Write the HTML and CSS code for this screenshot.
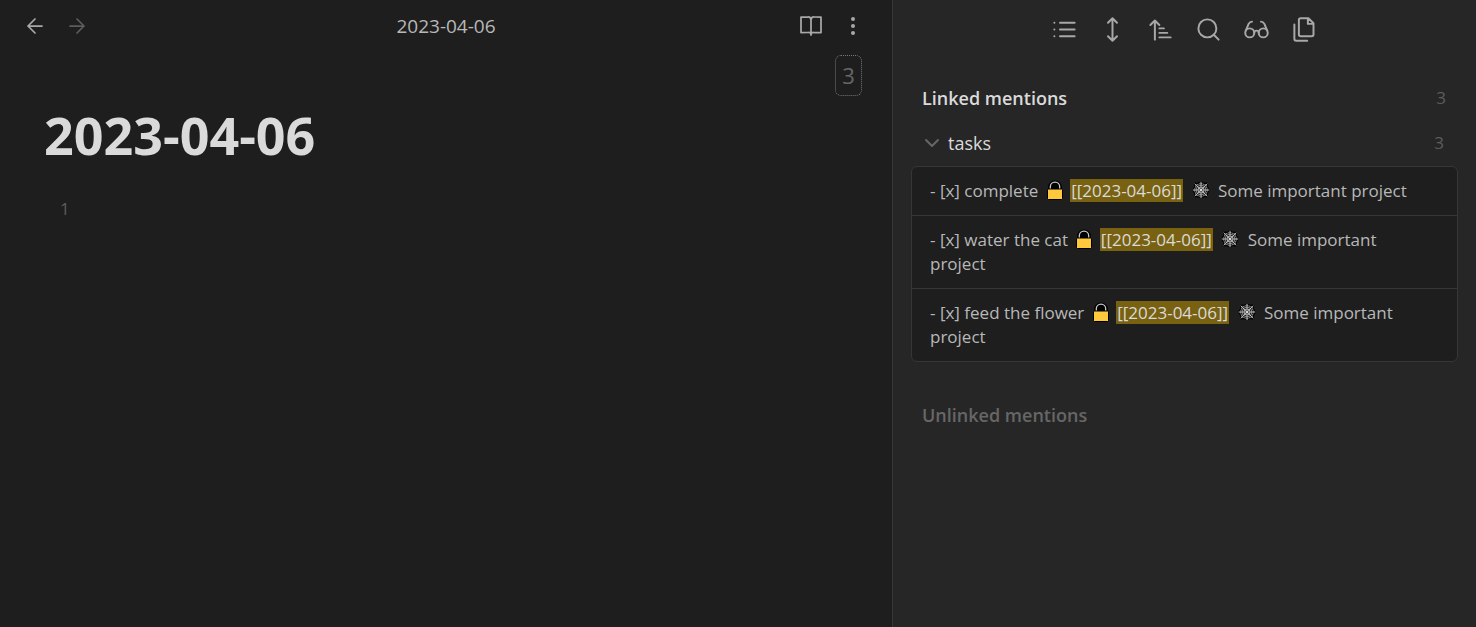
FILE: index.html
```
<!DOCTYPE html>
<html lang="en">
<head>
<meta charset="utf-8">
<title>2023-04-06</title>
<link rel="stylesheet" href="styles.css">
</head>
<body>
<svg class="sprite" aria-hidden="true">
  <symbol id="lock" viewBox="0 0 16 20">
    <path d="M1 10V7.500a7 7 0 0 1 14 0V10z" fill="#000"/>
    <path d="M3.300 9.500V6.800a4.700 4.700 0 0 1 9.400 0V9.500" fill="none" stroke="#c8c8c8" stroke-width="1.300"/>
    <rect x="0.500" y="9" width="15" height="10.500" rx="1" fill="#ffc83d" stroke="#000"/>
  </symbol>
  <symbol id="web" viewBox="0 0 20 20">
    <path d="M10 0l3.300 2 4-.2.3 4L20 10l-2.400 4.200-.3 4-4-.2-3.300 2-3.300-2-4 .2-.3-4L0 10l2.400-4.200.3-4 4 .2z" fill="#000"/>
    <g fill="none" stroke="#d0d0d0" stroke-width=".9">
      <path d="M10 .8v18.400M.8 10h18.400M3 3l14 14M17 3L3 17"/>
      <path d="M10 2.200Q12.800 4.200 15.800 4.200Q15.800 7.200 17.800 10Q15.800 12.800 15.800 15.800Q12.800 15.800 10 17.800Q7.200 15.800 4.200 15.800Q4.200 12.800 2.200 10Q4.200 7.200 4.200 4.200Q7.200 4.200 10 2.200z" stroke-dasharray="1.600 .5"/>
      <path d="M10 4.300Q12 5.800 14.200 5.800Q14.200 8 15.700 10Q14.200 12 14.200 14.200Q12 14.200 10 15.700Q8 14.200 5.800 14.200Q5.800 12 4.300 10Q5.800 8 5.800 5.800Q8 5.800 10 4.300z"/>
      <path d="M10 6.600L12.500 7.500L13.400 10L12.500 12.500L10 13.400L7.500 12.500L6.600 10L7.500 7.500z"/>
    </g>
    <circle cx="10" cy="10" r="1.400" fill="#d8d8d8"/>
  </symbol>
</svg>

<div class="workspace">
  <main class="pane">
    <header class="view-header">
      <nav class="button-group history" aria-label="History">
        <button class="icon-button" type="button" aria-label="Back"><svg class="icon" viewBox="0 0 24 24"><path d="M19 12H5M12 19l-7-7 7-7"/></svg></button>
        <button class="icon-button" type="button" aria-label="Forward" disabled><svg class="icon" viewBox="0 0 24 24"><path d="M5 12h14M12 5l7 7-7 7"/></svg></button>
      </nav>
      <div class="view-title">2023-04-06</div>
      <div class="button-group view-actions">
        <button class="icon-button" type="button" aria-label="Reading view"><svg class="icon" viewBox="0 0 24 24"><path d="M2 3h7a3 3 0 0 1 3 2.500A3 3 0 0 1 15 3h7v15.500h-7.500a2.500 2.500 0 0 0-2.500 2.300a2.500 2.500 0 0 0-2.500-2.300H2zM12 5.500V21"/></svg></button>
        <button class="icon-button" type="button" aria-label="More options"><svg class="icon icon-dots" viewBox="0 0 24 24"><circle cx="12" cy="5" r="2"/><circle cx="12" cy="12" r="2"/><circle cx="12" cy="19" r="2"/></svg></button>
      </div>
    </header>
    <div class="backlink-row"><button class="backlink-count" type="button" aria-label="3 backlinks">3</button></div>
    <article class="note">
      <h1 class="note-title">2023-04-06</h1>
      <div class="line-number">1</div>
    </article>
  </main>

  <aside class="sidebar">
    <div class="toolbar" role="toolbar" aria-label="Backlinks">
      <button class="tool-button" type="button" aria-label="Collapse results"><svg class="icon" viewBox="0 0 24 24"><path d="M8 6h13M8 12h13M8 18h13M3 6h.01M3 12h.01M3 18h.01"/></svg></button>
      <button class="tool-button" type="button" aria-label="Show more context"><svg class="icon" viewBox="0 0 24 24"><path d="M8 18l4 4 4-4M8 6l4-4 4 4M12 2v20"/></svg></button>
      <button class="tool-button" type="button" aria-label="Change sort order"><svg class="icon" viewBox="0 0 24 24"><path d="M3 8l4-4 4 4M7 4v17M11 11h4M11 15h7M11 19h10"/></svg></button>
      <button class="tool-button" type="button" aria-label="Search"><svg class="icon" viewBox="0 0 24 24"><circle cx="11" cy="11" r="8"/><path d="M21 21l-4.300-4.300"/></svg></button>
      <button class="tool-button" type="button" aria-label="Show unlinked"><svg class="icon" viewBox="0 0 24 24"><circle cx="6" cy="15" r="4"/><circle cx="18" cy="15" r="4"/><path d="M14 15a2 2 0 0 0-4 0M2.500 13L5 7c.7-1.300 1.400-2 3-2M21.500 13L19 7c-.7-1.300-1.500-2-3-2"/></svg></button>
      <button class="tool-button" type="button" aria-label="Copy results"><svg class="icon" viewBox="0 0 24 24"><path d="M15.500 2H8.600C7.700 2 7 2.700 7 3.600v12.800c0 .9.700 1.600 1.600 1.600h9.800c.9 0 1.600-.7 1.600-1.600V6.500L15.500 2zM3 7.600v12.800c0 .9.700 1.600 1.600 1.600h9.800M15 2v5h5"/></svg></button>
    </div>

    <section class="mentions">
      <div class="section-head">
        <h2 class="section-title">Linked mentions</h2>
        <span class="count">3</span>
      </div>
      <button class="file-row" type="button" aria-expanded="true">
        <svg class="chevron" viewBox="0 0 14 10"><path d="M1 2l6 6 6-6"/></svg>
        <span class="file-name">tasks</span>
        <span class="count">3</span>
      </button>
      <ul class="matches">
        <li class="match">- [x] complete <svg class="emoji lock" role="img" aria-label="lock"><use href="#lock"/></svg> <mark>[[2023-04-06]]</mark> <svg class="emoji web" role="img" aria-label="spider web"><use href="#web"/></svg> Some important project</li>
        <li class="match">- [x] water the cat <svg class="emoji lock" role="img" aria-label="lock"><use href="#lock"/></svg> <mark>[[2023-04-06]]</mark> <svg class="emoji web" role="img" aria-label="spider web"><use href="#web"/></svg> Some important project</li>
        <li class="match">- [x] feed the flower <svg class="emoji lock" role="img" aria-label="lock"><use href="#lock"/></svg> <mark>[[2023-04-06]]</mark> <svg class="emoji web" role="img" aria-label="spider web"><use href="#web"/></svg> Some important project</li>
      </ul>
    </section>

    <section class="unlinked">
      <h2 class="section-title">Unlinked mentions</h2>
    </section>
  </aside>
</div>
</body>
</html>
```
FILE: styles.css
```
* {
  box-sizing: border-box;
}

body {
  margin: 0;
  background: #1e1e1e;
  color: #b8b8b8;
  font-family: "Open Sans", "Noto Sans", sans-serif;
  font-size: 17px;
  line-height: 24px;
}

button {
  padding: 0;
  border: 0;
  background: none;
  color: inherit;
  font: inherit;
}

h1,
h2,
ul {
  margin: 0;
  padding: 0;
}

.sprite {
  position: absolute;
  width: 0;
  height: 0;
}

.workspace {
  display: grid;
  grid-template-columns: minmax(0, 892fr) minmax(0, 584fr);
  min-height: 100vh;
}

.view-header {
  display: grid;
  grid-template-columns: 1fr auto 1fr;
  align-items: center;
  height: 52px;
  padding: 0 18px;
}

.button-group {
  display: flex;
}

.history {
  margin-left: -4px;
}

.view-actions {
  justify-content: flex-end;
}

.view-title {
  font-size: 19px;
}

.icon-button,
.tool-button {
  display: grid;
  place-items: center;
  width: 42px;
  height: 36px;
  color: #a8a8a8;
}

.icon-button:disabled {
  color: #5c5c5c;
}

.icon {
  width: 24px;
  height: 24px;
  fill: none;
  stroke: currentColor;
  stroke-width: 1.75;
  stroke-linecap: round;
  stroke-linejoin: round;
}

.icon-dots {
  fill: currentColor;
  stroke: none;
}

.backlink-row {
  display: flex;
  justify-content: flex-end;
  padding: 3px 30px 0;
}

.backlink-count {
  width: 27px;
  height: 41px;
  padding-bottom: 2px;
  border: 1px dotted #777;
  border-radius: 6px;
  color: #666;
  font-size: 22px;
}

.note {
  padding: 7px 44px;
}

.note-title {
  color: #dadada;
  font-size: 52px;
  font-weight: 700;
  line-height: 64px;
}

.line-number {
  margin-top: 30px;
  padding-left: 16px;
  color: #5c5c5c;
  font-size: 17px;
}

.sidebar {
  border-left: 1px solid #363636;
  background: #262626;
}

.toolbar {
  display: flex;
  justify-content: center;
  height: 58px;
}

.tool-button {
  width: 48px;
  height: 58px;
}

.tool-button .icon {
  width: 27px;
  height: 27px;
}

.mentions {
  padding: 28px 18px 0;
}

.section-head {
  display: flex;
  justify-content: space-between;
  padding: 0 12px 0 11px;
}

.section-title {
  color: #dadada;
  font-size: 18px;
  font-weight: 600;
  line-height: 24px;
}

.count {
  color: #5c5c5c;
  font-size: 17px;
}

.file-row {
  display: flex;
  align-items: center;
  width: 100%;
  margin: 21px 0 11px;
  padding: 0 14px;
}

.chevron {
  width: 14px;
  height: 10px;
  fill: none;
  stroke: #666;
  stroke-width: 2;
  stroke-linecap: round;
  stroke-linejoin: round;
}

.file-name {
  flex: 1;
  padding-left: 9px;
  color: #dadada;
  font-size: 18px;
  text-align: left;
}

.matches {
  overflow: hidden;
  border: 1px solid #363636;
  border-radius: 6px;
  background: #1e1e1e;
  list-style: none;
}

.match {
  padding: 12px 30px 12px 18px;
}

.match + .match {
  border-top: 1px solid #363636;
}

mark {
  padding: 0 1px;
  background: #786211;
  color: #dadada;
}

.emoji {
  vertical-align: -3px;
}

.lock {
  width: 16px;
  height: 20px;
  margin: 0 3px 0 4px;
}

.web {
  width: 18px;
  height: 20px;
  margin: 0 4px;
}

.unlinked {
  padding: 41px 29px;
}

.unlinked .section-title {
  color: #666;
}
```
